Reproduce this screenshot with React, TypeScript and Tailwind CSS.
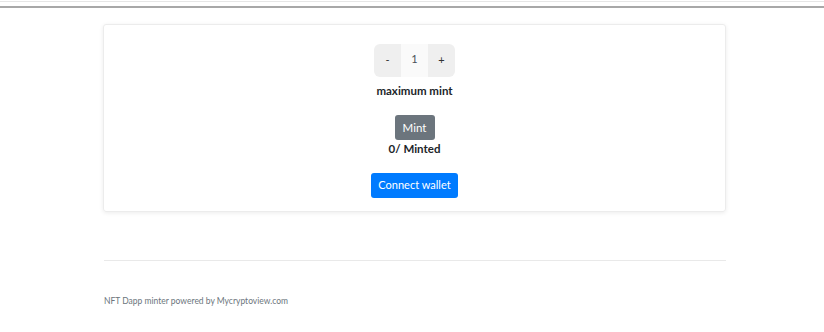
export default function App() {
  return (
    <div className="w-[824px] h-[332px] bg-white overflow-hidden" style={{ fontFamily: 'Lato, "Open Sans", sans-serif' }}>
      <div className="h-[1px] mt-[1px] bg-[#e6e6e6]" />
      <div className="h-[2px] mt-[4px] bg-[#a8a8a8]" />
      <div className="ml-[103px] w-[623px] mt-[16px] border border-[#ececec] rounded-[3px] shadow-[0_1px_4px_rgba(0,0,0,0.08)] flex flex-col items-center pt-[19px] pb-[13px]">
        <div className="flex h-[33px]">
          <button className="w-[27px] h-[33px] bg-[#efefef] rounded-l-[6px] text-[11px] text-[#333]">-</button>
          <div className="w-[27px] h-[33px] bg-[#fafafa] text-[11px] text-[#495057] flex items-center justify-center pb-[3px]">1</div>
          <button className="w-[27px] h-[33px] bg-[#efefef] rounded-r-[6px] text-[11px] text-[#333]">+</button>
        </div>
        <div className="mt-[6px] text-[11.5px] font-bold text-[#212529] leading-[16px]">maximum mint</div>
        <button className="mt-[16px] w-[40px] h-[25px] bg-[#6c757d] rounded-[3px] text-white text-[11.5px]">Mint</button>
        <div className="mt-[1px] text-[11.5px] font-bold text-[#212529] leading-[16px]">0/ Minted</div>
        <button className="mt-[16px] w-[87px] h-[25px] bg-[#007bff] rounded-[3px] text-white text-[11px]">Connect wallet</button>
      </div>
      <div className="ml-[104px] w-[622px] mt-[48px] h-[1px] bg-[#e9e9e9]" />
      <div className="ml-[104px] mt-[34px] text-[8.5px] text-[#6c757d]">NFT Dapp minter powered by Mycryptoview.com</div>
    </div>
  );
}
